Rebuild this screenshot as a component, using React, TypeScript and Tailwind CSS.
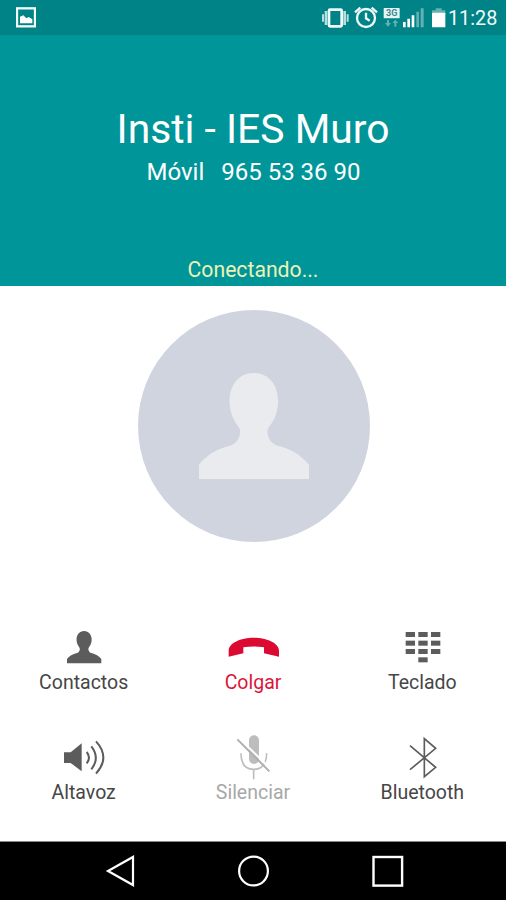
import type { ReactNode } from 'react';

interface Action {
  label: string;
  color: string;
  icon: ReactNode;
}

const personPath =
  'M165 0C210 0 238 36 238 85C238 118 225 145 211 162C205 171 205 180 209 192C213 204 220 212 234 218C275 227 310 248 331 277V319H0V277C20 248 55 227 96 218C110 212 117 204 121 192C125 180 125 171 119 162C105 145 92 118 92 85C92 36 120 0 165 0Z';

const keys = [
  [41, 30], [79, 30], [117, 30],
  [41, 56], [79, 56], [117, 56],
  [41, 81], [79, 81], [117, 81],
  [79, 106],
];

const actions: Action[] = [
  {
    label: 'Contactos',
    color: 'text-[#464646]',
    icon: (
      <g transform="translate(39 27) scale(0.311 0.304)">
        <path d={personPath} fill="#5c5c5c" />
      </g>
    ),
  },
  {
    label: 'Colgar',
    color: 'text-[#dc1439]',
    icon: (
      <path
        d="M17 104V86C17 63 53 47 92 47C131 47 168 63 168 86V104L123 94V76C102 73 82 73 61 76V94Z"
        fill="#dc0a32"
      />
    ),
  },
  {
    label: 'Teclado',
    color: 'text-[#464646]',
    icon: keys.map(([x, y]) => (
      <rect key={`${x}-${y}`} x={x} y={y} width="28" height="15" fill="#5c5c5c" />
    )),
  },
  {
    label: 'Altavoz',
    color: 'text-[#464646]',
    icon: (
      <>
        <path d="M30 61H50L83 34V118L50 93H30Z" fill="#5c5c5c" />
        <path
          d="M98 60Q112 77 98 94M112 43Q139 78 112 112M126 28Q170 76 126 125"
          fill="none"
          stroke="#5c5c5c"
          strokeWidth="6"
        />
      </>
    ),
  },
  {
    label: 'Silenciar',
    color: 'text-[#a8a8a8]',
    icon: (
      <>
        <rect x="78" y="10" width="30" height="86" rx="15" fill="#bdbdbd" />
        <path
          d="M54 64C54 98 70 112 92 112S131 98 131 64M92 112V142"
          fill="none"
          stroke="#bdbdbd"
          strokeWidth="5"
        />
        <path d="M47 17L145 113" stroke="#fff" strokeWidth="6" />
        <path d="M43 22L139 118" stroke="#b0b0b0" strokeWidth="6" />
      </>
    ),
  },
  {
    label: 'Bluetooth',
    color: 'text-[#464646]',
    icon: (
      <path
        d="M54 41L131 106L97 134V20L131 49L54 113"
        fill="none"
        stroke="#5c5c5c"
        strokeWidth="5"
      />
    ),
  },
];

function StatusBar() {
  return (
    <div className="flex h-[35px] shrink-0 items-start bg-[#008386] text-white">
      <svg className="ml-4 h-[35px] w-5" viewBox="0 0 60 105">
        <rect x="3" y="25" width="54" height="54" fill="none" stroke="#f2fafa" strokeWidth="7" />
        <path d="M12 70V50L22 46L31 55L38 51L49 58V70Z" fill="#fff" />
      </svg>
      <svg className="ml-[286px] h-[35px] w-[27px]" viewBox="0 0 81 105">
        <rect x="21" y="29" width="38" height="50" rx="3" fill="none" stroke="#eef9f9" strokeWidth="8" />
        <path d="M12 33V75M68 33V75" stroke="#b8dfe0" strokeWidth="8" />
        <path d="M3 43V65M77 43V65" stroke="#b8dfe0" strokeWidth="6" />
      </svg>
      <svg className="ml-[5px] h-[35px] w-6" viewBox="0 0 72 105" fill="none" stroke="#eef9f9" strokeWidth="7">
        <circle cx="36" cy="54" r="27" />
        <path d="M36 38V55L47 62M3 37L19 23M69 37L53 23" />
      </svg>
      <svg className="ml-[5px] h-[35px] w-[17px]" viewBox="0 0 51 105">
        <rect x="2" y="24" width="48" height="31" rx="2" fill="#e4f4f4" />
        <text x="26" y="49" textAnchor="middle" fontSize="27" fontFamily="Roboto" fontWeight="700" fill="#3d8a8d">
          3G
        </text>
        <path d="M15 60V72M37 66V80" stroke="#5fb3b5" strokeWidth="6" />
        <path d="M6 69H24L15 80ZM28 69H46L37 59Z" fill="#5fb3b5" />
      </svg>
      <svg className="ml-0.5 h-[35px] w-[23px]" viewBox="0 0 69 105">
        <path d="M3 66H11V82H3ZM16 56H24V82H16ZM29 46H37V82H29Z" fill="#fff" />
        <path d="M43 35H51V82H43ZM56 25H65V82H56Z" fill="#62b1b3" />
      </svg>
      <svg className="ml-1.5 h-[35px] w-[15px]" viewBox="0 0 45 105">
        <path d="M14 25H32V31H43V40H3V31H14Z" fill="#62b1b3" />
        <rect x="3" y="38" width="40" height="44" rx="2" fill="#fff" />
      </svg>
      <span className="ml-[2px] mt-[5px] whitespace-nowrap text-[19.8px] leading-7 text-[#f2fafa]">11:28</span>
    </div>
  );
}

function CallHeader() {
  return (
    <header className="flex h-[251px] shrink-0 flex-col items-center bg-[#009598] text-white">
      <h1 className="mt-[69px] whitespace-nowrap text-[40.8px] leading-[50px]">Insti - IES Muro</h1>
      <div className="ml-px mt-[4px] flex gap-[17px] whitespace-nowrap text-[24px] leading-[28px]">
        <span>Móvil</span>
        <span>965 53 36 90</span>
      </div>
      <p className="mt-auto text-[21.2px] leading-[32px] text-[#eef2b4]">Conectando...</p>
    </header>
  );
}

function NavBar() {
  return (
    <nav className="flex h-[59px] shrink-0 items-center border-t border-[#8a8a8a] bg-black">
      <svg className="ml-[104px] h-9 w-8" viewBox="0 0 32 36" fill="none" stroke="#fff" strokeWidth="2.2">
        <path d="M29 4V32L4 18Z" />
      </svg>
      <svg className="ml-[99px] h-9 w-9" viewBox="0 0 36 36" fill="none" stroke="#fff" strokeWidth="2.2">
        <circle cx="18.5" cy="18" r="14.4" />
      </svg>
      <svg className="ml-[99px] h-9 w-9" viewBox="0 0 36 36" fill="none" stroke="#fff" strokeWidth="2.4">
        <rect x="3.5" y="4" width="28.6" height="28.6" />
      </svg>
    </nav>
  );
}

export default function App() {
  return (
    <div className="flex h-[900px] w-[506px] flex-col overflow-hidden bg-white font-[Roboto,sans-serif]">
      <StatusBar />
      <CallHeader />
      <main className="flex min-h-0 flex-1 flex-col items-center">
        <div className="ml-px mt-6 flex h-[232px] w-[232px] shrink-0 items-center justify-center rounded-full bg-[#d0d4de]">
          <svg className="h-[106px] w-[110px]" viewBox="0 0 331 319" preserveAspectRatio="none">
            <path d={personPath} fill="#e9ebef" />
          </svg>
        </div>
        <div className="mt-20 grid w-[508px] shrink-0 grid-cols-3">
          {actions.map((action) => (
            <button key={action.label} className="flex h-[110px] flex-col items-center">
              <svg className="h-12 w-[60px]" viewBox="0 0 180 144">
                {action.icon}
              </svg>
              <span className={`mt-px text-[19.5px] leading-6 ${action.color}`}>{action.label}</span>
            </button>
          ))}
        </div>
      </main>
      <NavBar />
    </div>
  );
}
